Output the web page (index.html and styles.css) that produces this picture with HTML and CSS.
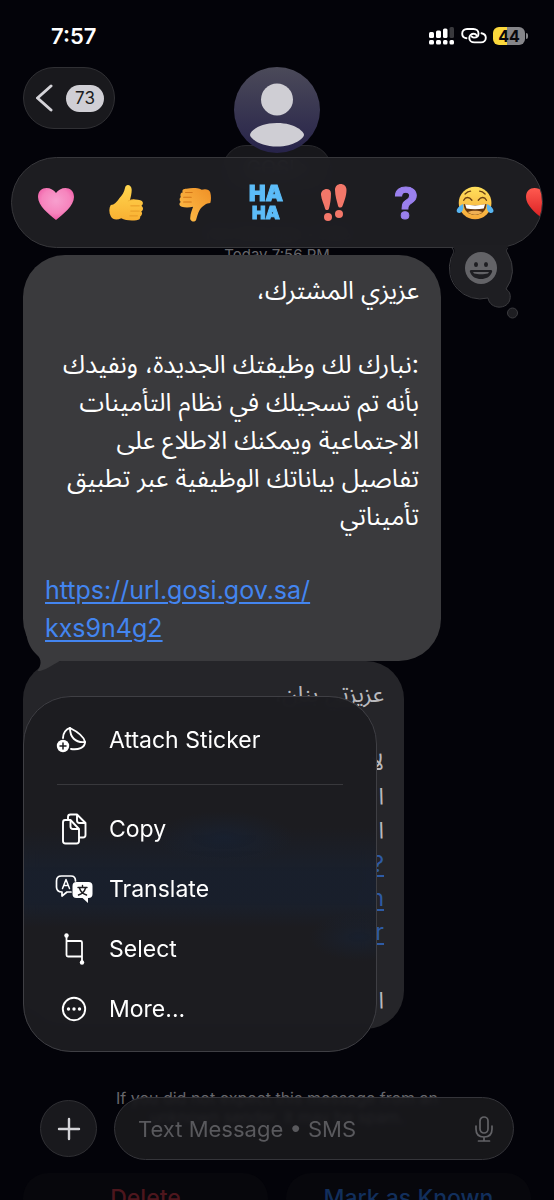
FILE: index.html
```html
<!DOCTYPE html>
<html lang="en">
<head>
    <meta charset="UTF-8">
    <meta name="viewport" content="width=device-width, initial-scale=1.0">
    <title>Messages</title>
    <link rel="stylesheet" href="styles.css">
</head>
<body>
    <div class="phone">
        <div class="status-bar">
            <span class="time">7:57</span>
            <div class="status-icons">
                <svg class="signal" viewBox="0 0 26 18" fill="#fff">
                    <rect x="0" y="5" width="5" height="6" rx="1.5"/>
                    <rect x="7" y="3.500" width="5" height="7.500" rx="1.500"/>
                    <rect x="14" y="1.500" width="4.500" height="9.500" rx="1.500"/>
                    <rect x="20.500" y="0" width="4.500" height="11" rx="1.500" fill="#39393d"/>
                    <rect x="0" y="13" width="5" height="4.500" rx="1.500"/>
                    <rect x="7" y="13" width="5" height="4.500" rx="1.500"/>
                    <rect x="14" y="13" width="4.500" height="4.500" rx="1.500"/>
                    <rect x="20.500" y="13" width="4.500" height="4.500" rx="1.500"/>
                </svg>
                <svg class="chain" viewBox="0 0 26 18" fill="none" stroke="#fff" stroke-width="1.900" stroke-linecap="round">
                    <path d="M5.500 11.200C2.800 10.800 1.200 9 1.200 6.700 1.200 3.800 3.300 2 6 2h6.300c3.200 0 5.200 2 5.200 4.400 0 2.600-2 4.200-4.600 4.200-1.300 0-2-.6-2.400-1.300"/>
                    <path d="M20.500 6.200c2.500.5 4.300 2 4.300 4.500 0 2.700-2 4.700-4.800 4.700h-6.500c-3.300 0-5.200-1.900-5.200-4.500 0-2.500 2-4.200 4.500-4.200 1.300 0 2.200.6 2.600 1.400"/>
                </svg>
                <span class="battery">44</span>
            </div>
        </div>

        <header class="chat-header">
            <button class="back-btn" aria-label="Back">
                <svg viewBox="0 0 18 30" fill="none" stroke="#d4d3d8" stroke-width="3" stroke-linecap="round" stroke-linejoin="round">
                    <path d="M15 3 1.500 15 15 27"/>
                </svg>
                <span class="unread">73</span>
            </button>
            <div class="contact">
                <svg class="avatar" viewBox="0 0 86 86">
                    <defs>
                        <linearGradient id="avatarBg" x1="0" y1="0" x2="0" y2="1">
                            <stop offset="0" stop-color="#4b4a59"/>
                            <stop offset="1" stop-color="#27234a"/>
                        </linearGradient>
                    </defs>
                    <circle cx="43" cy="43" r="43" fill="url(#avatarBg)"/>
                    <circle cx="43" cy="32.500" r="16" fill="#cfced4"/>
                    <path d="M16 68c0-3 8-12 27-12s27 9 27 12-10 11.500-27 11.500S16 71 16 68z" fill="#cfced4"/>
                </svg>
                <button class="contact-name">GOSI ›</button>
            </div>
        </header>

        <main class="thread">
            <p class="meta">Text Message • SMS<br>Today 7:56 PM</p>

            <article class="bubble bubble-main">
                <p dir="rtl" lang="ar">عزيزي المشترك،</p>
                <p dir="rtl" lang="ar">:نبارك لك وظيفتك الجديدة، ونفيدك<br>بأنه تم تسجيلك في نظام التأمينات<br>الاجتماعية ويمكنك الاطلاع على<br>تفاصيل بياناتك الوظيفية عبر تطبيق<br>تأميناتي</p>
                <p><a href="#">https://url.gosi.gov.sa/<br>kxs9n4g2</a></p>
                <svg class="bubble-tail" viewBox="0 0 44 40">
                    <path d="M3 0c1 12 5 18 11 24 4 3 5 9 1 15-1 2 0 2 2 1 8-2 15-8 20-10h7V0z" fill="#3a3a3d"/>
                </svg>
            </article>

            <article class="bubble bubble-next" lang="ar" dir="rtl">
                <p>عزيزتي بنان،</p>
                <p>لا<br>ا<br>ا<br><a href="#">?</a><br><a href="#">n</a><br><a href="#">r</a></p>
                <p>ا</p>
            </article>

            <p class="notice">If you did not expect this message from an<br>unknown sender, it may be spam.</p>

            <div class="spam-actions">
                <button class="delete">Delete</button>
                <button class="known">Mark as Known</button>
            </div>
        </main>

        <div class="reactions">
            <div class="reaction-list">
                <button aria-label="Love">
                    <svg viewBox="0 0 40 40">
                        <defs>
                            <radialGradient id="pink" cx=".5" cy=".4" r=".65">
                                <stop offset="0" stop-color="#f79fce"/>
                                <stop offset=".6" stop-color="#f684bd"/>
                                <stop offset="1" stop-color="#ee4fa0"/>
                            </radialGradient>
                        </defs>
                        <path d="M20 37C13 31 2 23 2 14 2 8 6 5 10.500 5c4 0 7.500 2 9.500 5 2-3 5.500-5 9.500-5C34 5 38 8 38 14c0 9-11 17-18 23z" fill="url(#pink)"/>
                    </svg>
                </button>
                <button aria-label="Like">
                    <svg viewBox="-1 -1 42 42">
                        <defs>
                            <linearGradient id="thumb" x1="0" y1="0" x2="0" y2="1">
                                <stop offset="0" stop-color="#ffd64e"/>
                                <stop offset="1" stop-color="#f9b032"/>
                            </linearGradient>
                        </defs>
                        <path d="M4 22c4 0 6-3 9-7 3-3 5-6 6-11 1-5 7-3 7 2 0 4-1 8-2 11 4-1 8-1 11 0 4 1 3 5 1 6 3 2 2 5 0 6 2 2 0 5-1 5 0 3-1 4-4 4-6 1-12 0-16-2-4 2-9 2-11-2-2-4-2-9 0-12z" fill="url(#thumb)"/>
                        <path d="M25 23h9M25 28.500h9M24 33.500h8" fill="none" stroke="#e69a26" stroke-width="1" stroke-linecap="round"/>
                        <path d="M22 18c2-1 4-1.500 7-1.500" fill="none" stroke="#efb033" stroke-width="1"/>
                    </svg>
                </button>
                <button aria-label="Dislike">
                    <svg viewBox="0 -1 42 42">
                        <defs>
                            <linearGradient id="down" x1="1" y1="0" x2="0" y2="1">
                                <stop offset="0" stop-color="#ef9026"/>
                                <stop offset="1" stop-color="#ffc04b"/>
                            </linearGradient>
                        </defs>
                        <path d="M36 20c-4 0-8 3-11 7-2 3-3 8-4 11-2 3-7 1-6-3 0-4 2-8 3-11-4 1-9 1-12 0-3-1-3-4-1-5-2-2-1-5 0-5-1-3 0-5 2-5-1-3 1-4 4-4 6-1 11-1 16 1 3-1 8-1 9 3 1 4 1 8 0 11z" fill="url(#down)"/>
                        <path d="M8 19h8M8 14h8M10 9h7" fill="none" stroke="#d47719" stroke-width="1.100" stroke-linecap="round"/>
                    </svg>
                </button>
                <button class="haha" aria-label="Haha"><span>HA</span><span>HA</span></button>
                <button aria-label="Emphasize">
                    <svg viewBox="1 0 40 40" fill="#f37769">
                        <path d="M6 12c-.5-7 10-8.500 10-1.500 0 6-1 11-2 15-.7 2-3.500 2-4 0-1-4-3.500-9-4-13.500z"/>
                        <path d="M20 7c0-8 11.500-8 11.500 0 0 6-2.500 12-4 16-1 2.300-4 2-4.500-.3-1-4-3-10-3-15.700z"/>
                        <circle cx="13" cy="34" r="4"/>
                        <circle cx="24" cy="31" r="4"/>
                    </svg>
                </button>
                <button class="question" aria-label="Question">?</button>
                <button aria-label="Tears of joy">
                    <svg viewBox="-1 -2 44 44">
                        <defs>
                            <linearGradient id="joy" x1="0" y1="0" x2="0" y2="1">
                                <stop offset="0" stop-color="#ffe05b"/>
                                <stop offset="1" stop-color="#f6a93a"/>
                            </linearGradient>
                        </defs>
                        <circle cx="20" cy="20" r="18" fill="url(#joy)"/>
                        <path d="M7.500 21c8 2 17 2 25 0 0 7-5 12-12.500 12S7.500 28 7.500 21z" fill="#64370f"/>
                        <path d="M9 21.500c7 1.500 15 1.500 22 0l-1.500 4.500c-6 1-13 1-19 0z" fill="#fff"/>
                        <path d="M12 30c4-2 12-2 16 0-4 4-12 4-16 0z" fill="#f0b054"/>
                        <path d="M7.500 17c2-4 6-4 9 0M23.500 17c3-4 7-4 9 0M9 10c2-2 4-3 6-3M25 7c2 0 4 1 6 3" fill="none" stroke="#6d4213" stroke-width="1.500" stroke-linecap="round"/>
                        <path d="M6.500 21c2 5-1 10-4 10-5-1-3-6 4-10zM33.500 21c-2 5 1 10 4 10 5-1 3-6-4-10z" fill="#57b5f2"/>
                    </svg>
                </button>
                <button aria-label="Red heart">
                    <svg viewBox="0 0 40 40">
                        <defs>
                            <linearGradient id="red" x1="0" y1="0" x2="0" y2="1">
                                <stop offset="0" stop-color="#ff5a50"/>
                                <stop offset="1" stop-color="#d81c1f"/>
                            </linearGradient>
                        </defs>
                        <path d="M18 37C11 31 0 23 0 14 0 8 4 5 8.500 5c4 0 7.500 2 9.500 5 2-3 5.500-5 9.500-5C32 5 36 8 36 14c0 9-11 17-18 23z" fill="url(#red)"/>
                    </svg>
                </button>
            </div>
            <button class="emoji-picker" aria-label="More emoji">
                <svg viewBox="0 0 72 80">
                    <path d="M5 2c3 4 1 6-1 10A31 31 0 0 0 40 53c2 12 20 12 22 1 1-5-1-8-4-10A31 31 0 0 0 60 9c-2-3-2-5 0-7V0H5z" fill="#1e1e22"/>
                    <path d="M4 3c3 3 1 6-1 10A31 31 0 0 0 40 53c2 12 20 12 22 1 1-5-1-8-4-10A31 31 0 0 0 60 9c-2-3-2-4 0-6" fill="none" stroke="#3c3c40"/>
                    <circle cx="64.500" cy="68" r="5" fill="#1e1e22" stroke="#3c3c40"/>
                    <circle cx="33" cy="23" r="16" fill="#636367"/>
                    <ellipse cx="28" cy="19.500" rx="2" ry="2.500" fill="#1e1e22"/>
                    <ellipse cx="38" cy="19.500" rx="2" ry="2.500" fill="#1e1e22"/>
                    <path d="M23 25h20c1 0 1.500 1 1 2-2 5-6 7-11 7s-9-2-11-7c-.5-1 0-2 1-2z" fill="#1e1e22"/>
                    <path d="M25 27h16l-1 1.500c-4 1-10 1-14 0z" fill="#636367"/>
                </svg>
            </button>
        </div>

        <nav class="context-menu">
            <button>
                <svg viewBox="0 0 38 38" fill="none" stroke="#fff" stroke-width="1.900" stroke-linecap="round" stroke-linejoin="round">
                    <path d="M8 17c0-5 3-9 7-10 6 3 14 8 15 14 0 6-7 8-14 7"/>
                    <path d="M15 7c0 9 5 15 15 14"/>
                    <circle cx="8" cy="25" r="6.200" fill="#fff" stroke="none"/>
                    <path d="M5 25h6M8 22v6" stroke="#1c1c20" stroke-width="1.500"/>
                </svg>
                <span>Attach Sticker</span>
            </button>
            <hr>
            <button>
                <svg viewBox="0 0 38 38" fill="none" stroke="#fff" stroke-width="1.900" stroke-linejoin="round">
                    <path d="M10 10h5.500l8.500 9v12q0 2.500-2.500 2.500h-11q-2.500 0-2.500-2.500V12.500Q8 10 10 10z"/>
                    <path d="M15.500 10v6.500q0 2.500 2.500 2.500h6"/>
                    <path d="M13 10V7q0-2.500 2.500-2.500H22l8.500 8.500v12q0 2.500-2.500 2.500h-4M22 4.500v6q0 2.500 2.500 2.500h6"/>
                </svg>
                <span>Copy</span>
            </button>
            <button>
                <svg viewBox="0 0 38 38" fill="none" stroke="#fff" stroke-width="1.700" stroke-linejoin="round" stroke-linecap="round">
                    <path d="M16 22l-4 0-5 4v-4C3 22 1.500 20 1.500 17v-6C1.500 8 3.500 6 6.500 6H16c3 0 4.500 2 4.500 5"/>
                    <path d="M7.500 18.500 11 9.500l3.500 9M8.800 15.500h4.500" stroke-width="1.500"/>
                    <path d="M21.500 12h12q4 0 4 4v8q0 4-4 4h-.5v5l-5.500-5h-6q-4 0-4-4v-8q0-4 4-4z" fill="#fff" stroke="none"/>
                    <path d="M23 17.500h9M27.500 15.500v2M24.500 18c1 4 4 6 7 7M30.500 18c-1 4-4 6-7 7" stroke="#1c1c20" stroke-width="1.400"/>
                </svg>
                <span>Translate</span>
            </button>
            <button>
                <svg viewBox="0 0 38 38" fill="none" stroke="#fff" stroke-width="1.800">
                    <path d="M11.500 5v20q0 1.500 1.500 1.500h14V12.500q0-1.500-1.500-1.500h-14M27 26v6"/>
                    <circle cx="11.500" cy="5.500" r="2.200" fill="#fff" stroke="none"/>
                    <circle cx="27" cy="32.500" r="2.200" fill="#fff" stroke="none"/>
                </svg>
                <span>Select</span>
            </button>
            <button>
                <svg viewBox="0 0 38 38" fill="#fff">
                    <circle cx="19" cy="19" r="11.200" fill="none" stroke="#fff" stroke-width="1.900"/>
                    <circle cx="13.500" cy="19" r="1.700"/>
                    <circle cx="19" cy="19" r="1.700"/>
                    <circle cx="24.500" cy="19" r="1.700"/>
                </svg>
                <span>More...</span>
            </button>
        </nav>

        <footer class="composer">
            <button class="add-btn" aria-label="Add">
                <svg viewBox="0 0 24 24" stroke="#d4d4d8" stroke-width="2.400" stroke-linecap="round">
                    <path d="M12 2v20M2 12h20"/>
                </svg>
            </button>
            <div class="message-field">
                <input type="text" placeholder="Text Message • SMS" aria-label="Text Message">
                <button aria-label="Dictate">
                    <svg viewBox="0 0 20 28" fill="none" stroke="#626266" stroke-width="1.700" stroke-linecap="round">
                        <rect x="6" y="2" width="8" height="16" rx="4"/>
                        <path d="M2 11v3c0 5 3 8 8 8s8-3 8-8v-3M10 22v4M4.500 26h11"/>
                    </svg>
                </button>
            </div>
        </footer>
    </div>
</body>
</html>
```
FILE: styles.css
```css
* {
    margin: 0;
    padding: 0;
    box-sizing: border-box;
}

body {
    font-family: Inter, 'Noto Sans Arabic', 'DejaVu Sans', sans-serif;
    background: #030309;
    color: #fff;
}

button {
    background: none;
    border: none;
    color: inherit;
    font: inherit;
    cursor: pointer;
}

svg {
    display: block;
}

.phone {
    position: relative;
    height: 100vh;
    overflow: hidden;
}

/* Status bar */
.status-bar {
    display: flex;
    justify-content: space-between;
    align-items: center;
    height: 67px;
    padding: 4px 29px 0 51px;
}

.time {
    font-size: 22px;
    font-weight: 600;
}

.status-icons {
    display: flex;
    align-items: center;
    gap: 6px;
}

.signal,
.chain {
    width: 26px;
    height: 18px;
}

.battery {
    position: relative;
    width: 32px;
    height: 18px;
    border-radius: 6px;
    background: linear-gradient(90deg, #fbd83c 44%, #86868a 44%);
    color: #08080c;
    font-size: 16px;
    font-weight: 700;
    line-height: 18px;
    text-align: center;
}

.battery::after {
    content: '';
    position: absolute;
    top: 6px;
    right: -3px;
    width: 2px;
    height: 6px;
    border-radius: 0 2px 2px 0;
    background: #86868a;
}

/* Header */
.chat-header {
    display: grid;
    grid-template-columns: 1fr auto 1fr;
    align-items: start;
    padding: 0 23px;
}

.back-btn {
    display: flex;
    align-items: center;
    gap: 12px;
    width: 92px;
    height: 62px;
    padding: 0 10px 0 12px;
    border: 1px solid #303034;
    border-radius: 31px;
    background: #19191d;
}

.back-btn svg {
    width: 18px;
    height: 30px;
}

.unread {
    flex: 1;
    height: 27px;
    border-radius: 14px;
    background: #d0cfd5;
    color: #1c1c20;
    font-size: 17px;
    line-height: 27px;
}

.contact {
    display: flex;
    flex-direction: column;
    align-items: center;
}

.avatar {
    z-index: 1;
    width: 86px;
    height: 86px;
}

.contact-name {
    height: 46px;
    margin-top: -8px;
    padding: 0 22px;
    border: 1px solid #29292d;
    border-radius: 23px;
    background: #17171b;
    color: #8d8d92;
    font-size: 20px;
}

/* Conversation */
.thread {
    padding: 32px 23px 0;
}

.meta,
.notice {
    color: #67676c;
    text-align: center;
}

.meta {
    font-size: 15px;
    line-height: 21px;
}

.bubble {
    position: relative;
    white-space: nowrap;
}

.bubble-main {
    z-index: 1;
    margin: -10px 90px 0 0;
    padding: 16px 22px 14px;
    border-radius: 42px;
    background: #3a3a3d;
    font-size: 25px;
    line-height: 38px;
}

.bubble-main p + p {
    margin-top: 36px;
}

.bubble a {
    color: #4385f0;
    text-decoration-thickness: 2px;
    text-underline-offset: 3px;
}

.bubble-tail {
    position: absolute;
    z-index: -1;
    left: 0;
    bottom: -10px;
    width: 44px;
    height: 40px;
}

.bubble-next {
    margin-right: 127px;
    padding: 16px 20px 12px;
    border-radius: 38px;
    background: #252529;
    color: #b9b9bd;
    font-size: 23px;
    line-height: 34px;
}

.bubble-next p + p {
    margin-top: 34px;
}

.bubble-next a {
    color: #2e5ba5;
}

.notice {
    margin-top: 60px;
    font-size: 16px;
    line-height: 19px;
}

.spam-actions {
    display: grid;
    grid-template-columns: 1fr 1fr;
    gap: 18px;
    margin-top: 46px;
}

.spam-actions button {
    height: 50px;
    border-radius: 25px;
    background: #07070c;
    font-size: 23px;
    font-weight: 500;
}

.spam-actions .delete {
    color: #4d161d;
}

.spam-actions .known {
    color: #122f5c;
}

/* Tapback bar */
.reactions {
    position: absolute;
    z-index: 2;
    top: 157px;
    left: 11px;
    right: 11px;
}

.reaction-list {
    display: flex;
    align-items: center;
    height: 91px;
    padding-left: 9px;
    border: 1px solid #37373b;
    border-radius: 46px;
    background: rgba(31, 31, 35, 0.94);
    backdrop-filter: blur(8px);
    overflow: hidden;
}

.reaction-list button {
    display: flex;
    flex: 0 0 70px;
    flex-direction: column;
    align-items: center;
    justify-content: center;
}

.reaction-list svg {
    width: 40px;
    height: 40px;
}

.haha {
    color: #5cbcf8;
    font-size: 22px;
    font-weight: 900;
    line-height: 20px;
    -webkit-text-stroke: 1px #5cbcf8;
}

.haha span + span {
    font-size: 18px;
}

.question {
    color: #9a80ee;
    font-size: 44px;
    font-weight: 700;
    line-height: 44px;
    -webkit-text-stroke: 1px #9a80ee;
}

.emoji-picker {
    position: absolute;
    top: 88px;
    right: 23px;
}

.emoji-picker svg {
    width: 72px;
    height: 80px;
}

/* Long press menu */
.context-menu {
    position: absolute;
    z-index: 2;
    top: 696px;
    left: 23px;
    right: 177px;
    padding: 13px 0 12px;
    border: 1px solid #3f3f44;
    border-radius: 48px;
    background:
        radial-gradient(70px 26px at 200px 140px, rgba(20, 38, 66, 0.4), transparent),
        radial-gradient(50px 24px at 335px 240px, rgba(20, 38, 66, 0.4), transparent),
        linear-gradient(180deg, transparent 130px, rgba(20, 38, 66, 0.35) 175px, rgba(20, 38, 66, 0.35) 205px, transparent 230px),
        rgba(28, 28, 32, 0.97);
    backdrop-filter: blur(8px);
}

.context-menu button {
    display: flex;
    align-items: center;
    gap: 16px;
    width: 100%;
    height: 60px;
    padding: 0 31px;
    font-size: 23px;
    text-align: left;
}

.context-menu svg {
    width: 38px;
    height: 38px;
}

.context-menu hr {
    height: 1px;
    margin: 14px 33px;
    border: none;
    background: #38383c;
}

/* Composer */
.composer {
    position: absolute;
    z-index: 1;
    left: 40px;
    right: 40px;
    bottom: 40px;
    display: flex;
    align-items: center;
    gap: 17px;
}

.add-btn {
    display: flex;
    flex-shrink: 0;
    align-items: center;
    justify-content: center;
    width: 57px;
    height: 57px;
    border: 1px solid #303034;
    border-radius: 50%;
    background: #19191d;
}

.add-btn svg {
    width: 24px;
    height: 24px;
}

.message-field {
    display: flex;
    flex: 1;
    min-width: 0;
    align-items: center;
    height: 63px;
    padding: 0 19px 0 23px;
    border: 1px solid #35353a;
    border-radius: 32px;
    background: rgba(25, 25, 29, 0.9);
    backdrop-filter: blur(2px);
}

.message-field input {
    flex: 1;
    min-width: 0;
    border: none;
    outline: none;
    background: none;
    color: #fff;
    font: inherit;
    font-size: 22px;
}

.message-field input::placeholder {
    color: #59595d;
}

.message-field svg {
    width: 20px;
    height: 28px;
}
```
